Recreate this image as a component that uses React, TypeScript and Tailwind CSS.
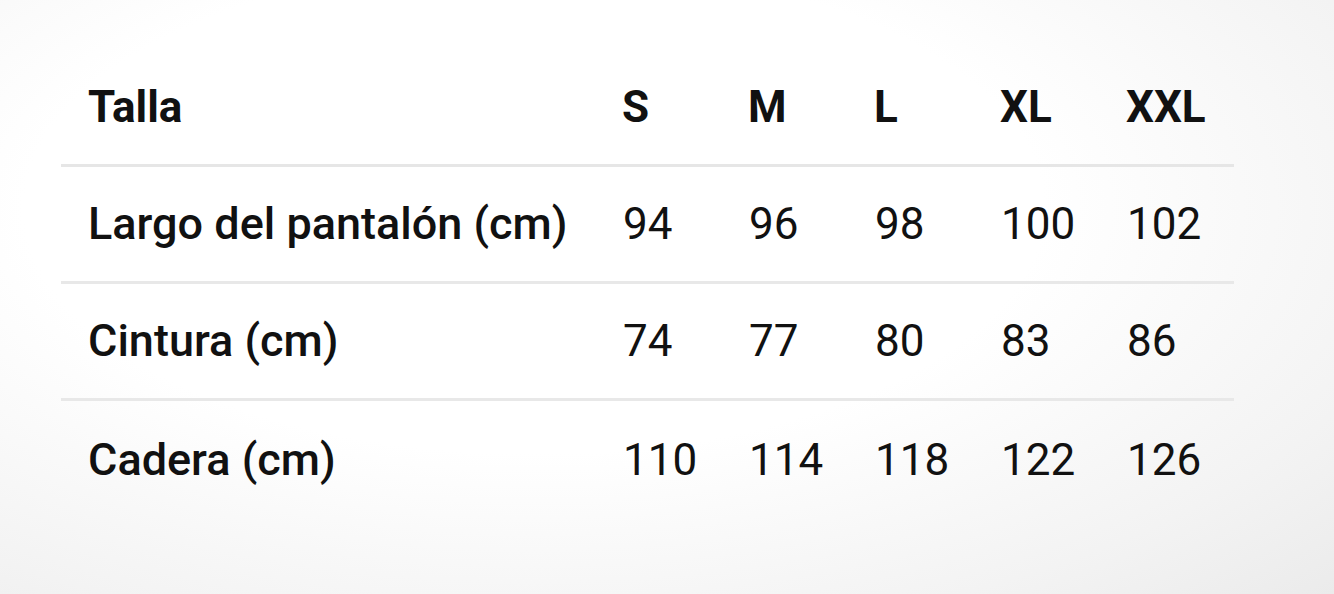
const SIZES = ["S", "M", "L", "XL", "XXL"];

const ROWS: { label: string; values: number[] }[] = [
  { label: "Largo del pantalón (cm)", values: [94, 96, 98, 100, 102] },
  { label: "Cintura (cm)", values: [74, 77, 80, 83, 86] },
  { label: "Cadera (cm)", values: [110, 114, 118, 122, 126] },
];

const grid =
  "grid grid-cols-[535px_126px_126px_126px_126px_134px] items-center h-[117px]";

export default function App() {
  return (
    <div
      className="w-[1334px] h-[594px] overflow-hidden bg-[radial-gradient(ellipse_at_40%_35%,#ffffff_45%,#f3f3f3_80%,#ebebeb_100%)] text-[#111111] text-[44px]"
      style={{ fontFamily: "Roboto, 'Noto Sans', sans-serif" }}
    >
      <div className="ml-[61px] mt-[50px] w-[1173px]">
        <div className={`${grid} border-b-[3px] border-[#e6e6e6]`}>
          <div className="pl-[27px] font-bold">Talla</div>
          {SIZES.map((s) => (
            <div key={s} className="pl-[26px] font-bold">
              {s}
            </div>
          ))}
        </div>
        {ROWS.map((row, i) => (
          <div
            key={row.label}
            className={`${grid} ${i < ROWS.length - 1 ? "border-b-[3px] border-[#e8e8e8]" : ""}`}
          >
            <div className="pl-[27px] font-medium text-[45px]">{row.label}</div>
            {row.values.map((v, j) => (
              <div key={j} className="pl-[27px]">
                {v}
              </div>
            ))}
          </div>
        ))}
      </div>
    </div>
  );
}
